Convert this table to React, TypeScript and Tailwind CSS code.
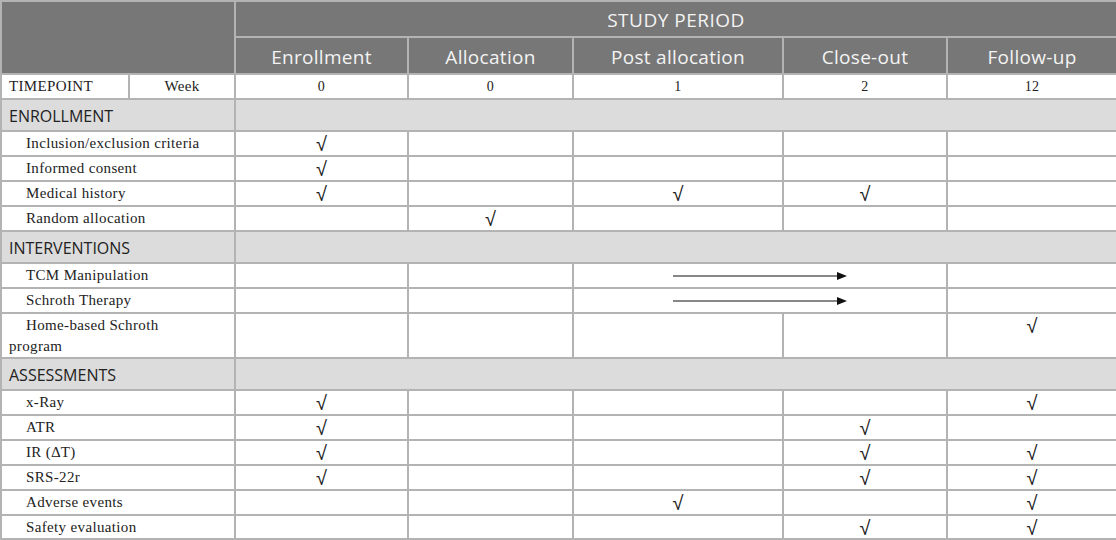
import React from "react";

type Row =
  | { kind: "section"; label: string }
  | { kind: "item"; label: React.ReactNode; key: string; checks: number[]; arrow?: boolean; tall?: boolean; last?: boolean };

// columns: 0 Enrollment, 1 Allocation, 2 Post allocation, 3 Close-out, 4 Follow-up
const ROWS: Row[] = [
  { kind: "section", label: "ENROLLMENT" },
  { kind: "item", key: "inc", label: "Inclusion/exclusion criteria", checks: [0] },
  { kind: "item", key: "inf", label: "Informed consent", checks: [0] },
  { kind: "item", key: "med", label: "Medical history", checks: [0, 2, 3] },
  { kind: "item", key: "rand", label: "Random allocation", checks: [1] },
  { kind: "section", label: "INTERVENTIONS" },
  { kind: "item", key: "tcm", label: "TCM Manipulation", checks: [], arrow: true },
  { kind: "item", key: "sch", label: "Schroth Therapy", checks: [], arrow: true },
  {
    kind: "item",
    key: "home",
    label: (
      <>
        Home-based Schroth
        <br />
        program
      </>
    ),
    checks: [4],
    tall: true,
  },
  { kind: "section", label: "ASSESSMENTS" },
  { kind: "item", key: "xray", label: "x-Ray", checks: [0, 4] },
  { kind: "item", key: "atr", label: "ATR", checks: [0, 3] },
  {
    kind: "item",
    key: "ir",
    label: (
      <>
        IR (<span className="italic">∆</span>T)
      </>
    ),
    checks: [0, 3, 4],
  },
  { kind: "item", key: "srs", label: "SRS-22r", checks: [0, 3, 4] },
  { kind: "item", key: "adv", label: "Adverse events", checks: [2, 4] },
  { kind: "item", key: "safe", label: "Safety evaluation", checks: [3, 4], last: true },
];

const PERIODS = ["Enrollment", "Allocation", "Post allocation", "Close-out", "Follow-up"];
const WEEKS = ["0", "0", "1", "2", "12"];

const sans = "font-['Open_Sans',sans-serif]";
const serif = "font-['Liberation_Serif',serif] tracking-[0.35px]";
const cell = "border-2 border-[#b3b3b3] p-0";

function Check() {
  return <div className="text-[20px] leading-[18px] text-[#222] text-center pt-[3px]">√</div>;
}

function Arrow() {
  return (
    <svg width="174" height="10" viewBox="0 0 174 10" className="mx-auto block">
      <line x1="0" y1="5" x2="166" y2="5" stroke="#111" strokeWidth="1.2" />
      <polygon points="164,1 174,5 164,9" fill="#111" />
    </svg>
  );
}

export default function App() {
  return (
    <div className="w-[1116px] h-[540px] bg-white overflow-hidden">
      <table className="w-[1116px] border-collapse table-fixed text-[#222]">
        <colgroup>
          <col className="w-[128px]" />
          <col className="w-[106px]" />
          <col className="w-[173px]" />
          <col className="w-[165px]" />
          <col className="w-[210px]" />
          <col className="w-[164px]" />
          <col className="w-[170px]" />
        </colgroup>
        <thead>
          <tr className="h-[36px] bg-[#777777]">
            <th colSpan={2} rowSpan={2} className={cell} />
            <th colSpan={5} className={`${cell} ${sans} text-[19px] font-normal text-[#f3f3f3] align-bottom leading-[24px] pb-[4px] tracking-[0.5px]`}>
              STUDY PERIOD
            </th>
          </tr>
          <tr className="h-[37px] bg-[#777777]">
            {PERIODS.map((p) => (
              <th key={p} className={`${cell} ${sans} text-[19px] font-normal text-[#f3f3f3] align-bottom leading-[24px] pb-[4px] tracking-[0.3px]`}>
                {p}
              </th>
            ))}
          </tr>
        </thead>
        <tbody>
          <tr className="h-[25px]">
            <td className={`${cell} ${serif} text-[15px] pl-[7px]`}>TIMEPOINT</td>
            <td className={`${cell} ${serif} text-[15px] text-center`}>Week</td>
            {WEEKS.map((w, i) => (
              <td key={i} className={`${cell} ${serif} text-[14px] text-center`}>{w}</td>
            ))}
          </tr>
          {ROWS.map((r) =>
            r.kind === "section" ? (
              <tr key={r.label} className="h-[32px] bg-[#dcdcdc]">
                <td colSpan={2} className={`${cell} ${sans} text-[16px] pl-[7px] pt-[2px]`}>{r.label}</td>
                <td colSpan={5} className={cell} />
              </tr>
            ) : (
              <tr key={r.key} className={r.tall ? "h-[45px]" : r.last ? "h-[24px]" : "h-[25px]"}>
                <td colSpan={2} className={`${cell} ${serif} text-[15px] leading-[21px] px-[7px] indent-[17px]`}>
                  {r.label}
                </td>
                {r.arrow ? (
                  <>
                    <td className={cell} />
                    <td className={cell} />
                    <td colSpan={2} className={cell}>
                      <Arrow />
                    </td>
                    <td className={cell} />
                  </>
                ) : (
                  [0, 1, 2, 3, 4].map((c) => (
                    <td key={c} className={`${cell} align-top`}>
                      {r.checks.includes(c) && <Check />}
                    </td>
                  ))
                )}
              </tr>
            )
          )}
        </tbody>
      </table>
    </div>
  );
}
